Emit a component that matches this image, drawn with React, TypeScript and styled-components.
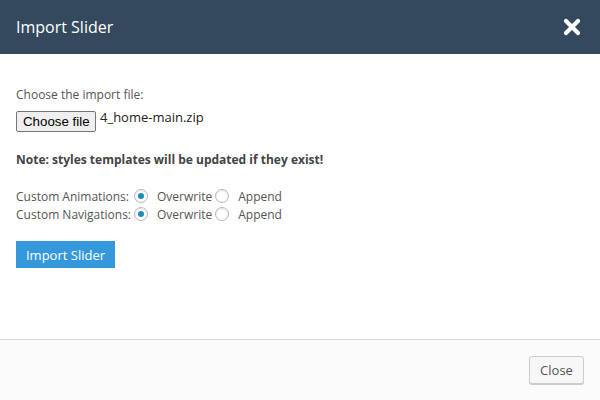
import React from "react";
import styled, { createGlobalStyle } from "styled-components";

const Global = createGlobalStyle`
  html, body { margin: 0; padding: 0; background: #fff; }
  body { font-family: "Open Sans", sans-serif; }
`;

const Dialog = styled.div`
  width: 600px;
  height: 400px;
  display: flex;
  flex-direction: column;
  background: #fff;
`;

const Header = styled.div`
  height: 54px;
  background: #34495e;
  display: flex;
  align-items: center;
  justify-content: space-between;
  padding: 0 16px;
  box-sizing: border-box;
`;

const Title = styled.div`
  color: #fff;
  font-size: 16px;
  font-family: "Open Sans", sans-serif;
  margin-top: -1px;
`;

const CloseX = styled.svg`
  width: 18px;
  height: 18px;
  margin-right: 3px;
`;

const Body = styled.div`
  flex: 1;
  padding: 33px 16px 0 16px;
  display: flex;
  flex-direction: column;
  align-items: flex-start;
`;

const Label = styled.div`
  font-size: 12px;
  color: #555;
  line-height: 16px;
`;

const FileRow = styled.div`
  display: flex;
  align-items: flex-start;
  margin-top: 8px;
`;

const FileButton = styled.button`
  font-family: "Liberation Sans", Arial, sans-serif;
  font-size: 13.3px;
  height: 21px;
  padding: 0 6px;
  background: #efefef;
  border: 1px solid #767676;
  border-radius: 2px;
  color: #000;
  line-height: 18px;
  width: 80px;
  box-sizing: border-box;
  white-space: nowrap;
`;

const FileName = styled.span`
  font-size: 13px;
  color: #222;
  margin-left: 4px;
  line-height: 14px;
  margin-top: -1px;
`;

const Note = styled.div`
  font-size: 12px;
  font-weight: 700;
  color: #444;
  margin-top: 20px;
  line-height: 16px;
`;

const Options = styled.div`
  margin-top: 19px;
  display: grid;
  grid-template-columns: auto auto;
  grid-auto-rows: 18px;
  font-size: 12px;
  color: #555;
`;

const RowLabel = styled.span`
  display: flex;
  align-items: center;
  margin-right: 0;
`;

const Choices = styled.div`
  display: flex;
  align-items: center;
`;

const Radio = styled.span<{ $checked?: boolean }>`
  width: 14px;
  height: 14px;
  border-radius: 50%;
  border: 1px solid #b4b9be;
  box-sizing: border-box;
  display: inline-flex;
  align-items: center;
  justify-content: center;
  margin: 0 9px 0 3px;
  background: #fff;
  box-shadow: inset 0 1px 2px rgba(0,0,0,0.1);
  &::after {
    content: "";
    width: 6px;
    height: 6px;
    border-radius: 50%;
    background: ${(p) => (p.$checked ? "#1e8cbe" : "transparent")};
  }
`;

const OptText = styled.span``;

const PrimaryButton = styled.button`
  margin-top: 18px;
  background: #3498db;
  color: #fff;
  border: none;
  font-family: "Open Sans", sans-serif;
  font-size: 13px;
  height: 27px;
  width: 99px;
  padding: 0;
`;

const Footer = styled.div`
  height: 61px;
  border-top: 1px solid #dcdcdc;
  background: #fbfbfb;
  display: flex;
  justify-content: flex-end;
  align-items: flex-start;
  padding: 16px 16px 0 0;
  box-sizing: border-box;
`;

const CloseButton = styled.button`
  height: 28px;
  width: 55px;
  background: #f7f7f7;
  border: 1px solid #ccc;
  border-radius: 3px;
  box-shadow: 0 1px 0 #ccc;
  color: #555;
  font-family: "Open Sans", sans-serif;
  font-size: 13px;
  padding: 0;
`;

const rows = ["Custom Animations:", "Custom Navigations:"];

export default function App() {
  return (
    <>
      <Global />
      <Dialog>
        <Header>
          <Title>Import Slider</Title>
          <CloseX viewBox="0 0 18 18">
            <path d="M3 3 L15 15 M15 3 L3 15" stroke="#fff" strokeWidth="4.2" strokeLinecap="round" />
          </CloseX>
        </Header>
        <Body>
          <Label>Choose the import file:</Label>
          <FileRow>
            <FileButton>Choose file</FileButton>
            <FileName>4_home-main.zip</FileName>
          </FileRow>
          <Note>Note: styles templates will be updated if they exist!</Note>
          <Options>
            {rows.map((r) => (
              <React.Fragment key={r}>
                <RowLabel>{r}</RowLabel>
                <Choices>
                  <Radio $checked />
                  <OptText>Overwrite</OptText>
                  <Radio />
                  <OptText>Append</OptText>
                </Choices>
              </React.Fragment>
            ))}
          </Options>
          <PrimaryButton>Import Slider</PrimaryButton>
        </Body>
        <Footer>
          <CloseButton>Close</CloseButton>
        </Footer>
      </Dialog>
    </>
  );
}
